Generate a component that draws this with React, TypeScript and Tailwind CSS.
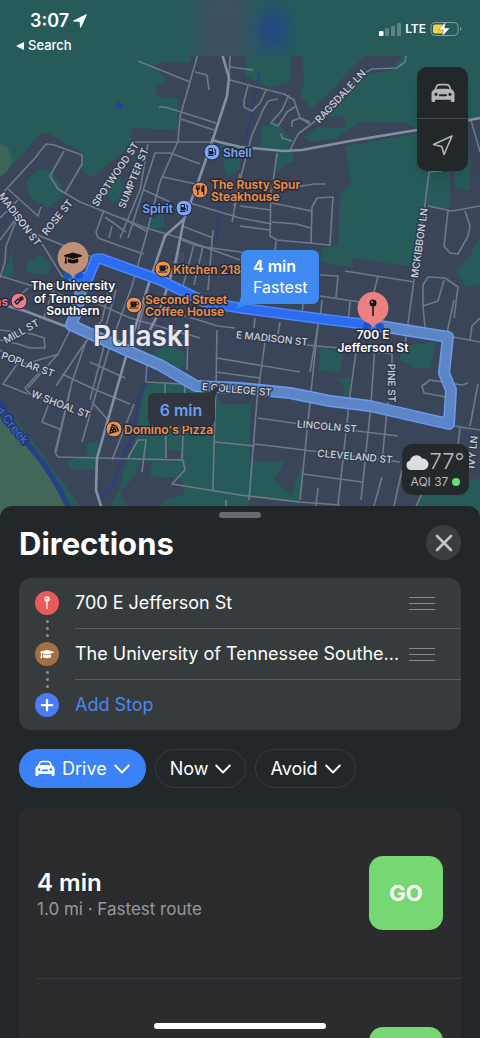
import type { ReactNode } from "react";
import { Plus, X } from "lucide-react";
import { FaCoffee, FaGasPump, FaGraduationCap, FaPizzaSlice } from "react-icons/fa";
import { FaUtensils } from "react-icons/fa6";

const PARKS = [
  "M0 0H190V63L160 62 154 66 167 81 155 87 158 98 178 98 178 130 132 128 131 145 108 164 92 178 80 167 83 153 65 143 48 133 40 134 22 155 0 178Z",
  "M246 50H292L290 82 270 88 245 76Z",
  "M302 50H372L352 68 330 92 312 108 300 96 304 82Z",
  "M407 50H480V117L418 129 405 123 360 122 346 132 344 116 322 118 340 92 366 74 392 70Z",
  "M303 137 318 127 348 128 338 138 312 142Z",
  "M262 126 278 123 292 141 286 150 294 154 293 162 284 163 280 172 276 168 276 152 260 148Z",
  "M346 146 418 133 425 140 429 172 425 215 412 266 400 265 352 258 353 267 320 262 322 248 338 245 340 193 351 185 348 165Z",
  "M429 172H450V208L427 206Z",
  "M452 160 470 156V190L455 188Z",
  "M456 271 470 256 480 236V284L465 287Z",
  "M26 182 40 168 52 172 66 194 48 208 30 197Z",
  "M112 178 121 176 124 198 112 204 107 194Z",
  "M220 142 240 144V168L226 178Z",
  "M148 222 164 212 164 226 154 231 147 228Z",
  "M26 263 40 255 50 263 49 275 26 272Z",
  "M4 274 12 250 14 278 0 276Z",
  "M0 406 18 422 45 458 80 506 80 520H0Z",
  "M155 350 170 346 184 352 186 364 177 372 152 370Z",
  "M145 384 175 384 216 392 222 404H251L250 440 250 462H284L274 480 291 496 302 463 300 520H104L120 488 124 470 135 440Z",
  "M85 445 98 440 98 470 70 470 68 460 88 456Z",
  "M320 348 344 352 340 372 318 371Z",
  "M337 378 350 378 350 396 344 396 344 386Z",
  "M400 346 436 342 430 368 415 368 400 360Z",
  "M420 493 480 478V520H412Z",
];

const TOWN_BLOCKS = [
  "M140 460 152 462 150 476 180 478 185 494 165 500 150 516 128 510 120 492 135 476Z",
  "M165 450 182 450 178 462 166 460Z",
  "M251 404 262 404 262 462 250 462Z",
  "M251 496 300 504 300 520 246 520Z",
];

const STREETS = [
  "M138 61 190 82",
  "M199 50 180 117 178 141 160 182 146 236 132 286 108 352 82 442",
  "M195 72 207 75 209 90",
  "M159 107 165 107 216 123",
  "M181 119 214 130",
  "M230 56 229 80",
  "M230 80 252 86 284 94 294 100 300 118 310 124",
  "M230 67 253 70",
  "M248 86 244 100 244 107 252 111 260 103 266 90",
  "M278 99 268 101 262 112 252 135 240 180 232 222",
  "M289 95 282 110 271 123 278 126 287 112 296 106",
  "M310 122 300 118 292 121 292 127",
  "M281 133 282 138 292 141",
  "M406 56 405 62 397 68 372 69 361 75 314 122 298 134 290 150",
  "M132 142 146 142 212 142",
  "M148 144 140 190 120 238",
  "M200 164 170 153 155 153 148 175 128 238",
  "M163 177 196 184",
  "M0 196 35 158 46 144 54 145 82 155 82 164 65 193",
  "M64 151 50 176 58 189 80 202 146 228 180 238 240 260",
  "M8 189 38 216 41 207",
  "M18 200 0 218",
  "M0 240 18 216 6 246 5 262 0 278",
  "M35 232 62 276 98 288",
  "M30 232 100 260",
  "M104 210 96 232 98 238 120 246 144 254",
  "M105 217 126 232",
  "M112 226 109 238",
  "M144 190 170 202",
  "M122 218 148 232",
  "M182 226 213 238",
  "M190 203 240 218 272 224",
  "M194 244 182 290",
  "M203 246 194 285",
  "M182 240 198 246 240 252 276 262",
  "M213 230 208 290",
  "M240 174 234 206",
  "M277 153 272 190",
  "M271 190 270 236 277 240 330 245 333 197 317 198 312 207 311 243",
  "M272 203 312 211",
  "M272 222 296 224 311 228",
  "M240 206 271 210",
  "M240 226 270 230",
  "M276 241 275 252",
  "M296 187 314 184 326 184",
  "M442 171 429 172 425 205 414 280 405 345",
  "M428 206 452 211 480 206",
  "M448 211 444 246 450 253 458 254 468 236 470 226 465 211",
  "M471 120 480 152",
  "M345 271 414 282",
  "M378 276 372 300",
  "M320 275 338 276 336 297",
  "M320 296 360 302",
  "M322 300 320 320",
  "M350 302 348 322",
  "M303 304 302 316",
  "M423 306 423 285 428 277 445 278 458 287 454 318",
  "M444 280 438 301 423 306 425 328",
  "M100 281 110 284 102 320 80 350 56 386",
  "M55 283 44 318",
  "M72 326 58 354 28 388",
  "M0 350 25 364 59 354",
  "M0 330 32 334 44 338 45 348 30 348 18 344 0 340",
  "M20 360 3 384 28 394",
  "M44 367 25 388 30 394 50 401 42 422 62 430",
  "M86 341 72 382 56 452",
  "M62 374 96 390 130 404",
  "M90 362 125 378",
  "M70 390 55 452 58 457 183 460 185 470 172 484 240 495 300 502 340 505",
  "M92 402 108 420",
  "M104 346 90 400",
  "M134 404 112 460",
  "M147 360 146 382 218 386",
  "M128 458 138 440 146 440 142 472",
  "M165 384 166 458",
  "M185 384 182 460",
  "M188 330 187 370",
  "M217 330 216 386 214 442 213 490",
  "M165 310 218 326 235 328",
  "M217 358 300 372",
  "M216 372 260 378",
  "M265 342 257 400 249 500",
  "M318 324 300 500",
  "M357 344 350 395 338 505",
  "M375 344 371 404 361 500",
  "M388 402 382 460",
  "M306 345 340 348",
  "M318 326 310 372",
  "M392 364 392 354 376 352",
  "M258 418 300 424 398 436",
  "M255 444 280 447 400 462",
  "M215 442 255 446",
  "M303 474 362 482",
  "M318 488 316 506",
  "M382 477 374 506",
  "M402 470 394 506",
  "M424 490 414 510",
  "M468 383 462 385 430 380 422 386 424 393 446 397",
  "M478 384 470 426",
  "M460 428 458 446",
  "M454 426 480 430",
  "M448 336 480 342",
  "M454 300 446 338",
  "M480 318 472 326 470 340",
  "M280 322 278 334",
  "M255 318 254 328",
  "M226 500 225 516",
  "M90 300 130 318 200 338",
  "M116 290 106 326",
  "M146 300 138 330",
  "M28 288 12 302",
  "M0 276 72 298",
];

const AVENUES = [
  "M221 50 229 78 227 96 211 145 198 182 187 212 184 219 165 236 150 280 125 360 97 458 96 490 104 516",
  "M184 219 176 260 160 310 150 330",
  "M211 140 240 147 284 151 302 150 350 141 417 130 480 118",
  "M0 304 25 311 70 328",
];

const SLOW_ROUTE =
  "M83 280 77 310 71 325 128 351 160 365 196 386 240 388 290 393 330 401 370 406 449 424 451 390 444 373 448 337 380 326";
const FAST_ROUTE = "M73 277 88 278 96 259 102 259 160 280 205 302 240 308 330 320 372 325";

type Label = { text: string; x: number; y: number; turn: number };

const STREET_LABELS: Label[] = [
  { text: "RAGSDALE LN", x: 340, y: 96, turn: -47 },
  { text: "SPOTWOOD ST", x: 115, y: 174, turn: -56 },
  { text: "SUMPTER ST", x: 133, y: 178, turn: -68 },
  { text: "ROSE ST", x: 57, y: 217, turn: -51 },
  { text: "MADISON ST", x: 20, y: 219, turn: 53 },
  { text: "MCKIBBON LN", x: 419, y: 243, turn: -82 },
  { text: "MILL ST", x: 21, y: 331, turn: -29 },
  { text: "POPLAR ST", x: 28, y: 364, turn: 20 },
  { text: "W SHOAL ST", x: 61, y: 404, turn: 21 },
  { text: "E MADISON ST", x: 272, y: 338, turn: 6 },
  { text: "E COLLEGE ST", x: 237, y: 389, turn: 5 },
  { text: "LINCOLN ST", x: 327, y: 426, turn: 5 },
  { text: "CLEVELAND ST", x: 355, y: 456, turn: 5 },
  { text: "PINE ST", x: 392, y: 383, turn: 89 },
  { text: "IVY LN", x: 472, y: 452, turn: -84 },
];

function CarIcon({ className }: { className: string }) {
  return (
    <svg viewBox="0 0 24 20" className={className} fill="currentColor" aria-hidden="true">
      <path
        fillRule="evenodd"
        d="M7 1C8.500 .6 15.500 .6 17 1c.9.2 1.500.7 1.900 1.500L20.600 6.500C22.500 7.600 23.500 8.800 23.500 11v7c0 .6-.4 1-1 1h-1.600c-.6 0-1-.4-1-1v-1.300H4.100V18c0 .6-.4 1-1 1H1.500c-.6 0-1-.4-1-1v-7c0-2.200 1-3.400 2.900-4.500L5.100 2.500C5.500 1.700 6.100 1.200 7 1ZM7.300 2.700 6.600 3.300 5.300 6.300C9 5.700 15 5.700 18.700 6.300L17.400 3.300l-.7-.6C14.500 2.300 9.500 2.300 7.300 2.700ZM5 9.700a1.600 1.600 0 1 0 0 3.200 1.600 1.600 0 0 0 0-3.200Zm14 0a1.600 1.600 0 1 0 0 3.200 1.600 1.600 0 0 0 0-3.200ZM9 11.200c-.6 0-1 .4-1 1s.4 1 1 1h6c.6 0 1-.4 1-1s-.4-1-1-1H9Z"
      />
    </svg>
  );
}

function Chevron() {
  return (
    <svg viewBox="0 0 16 10" className="h-[10px] w-4" fill="none" stroke="currentColor" strokeWidth="1.800" strokeLinecap="round" strokeLinejoin="round" aria-hidden="true">
      <path d="M1.200 1.500 8 8.500 14.800 1.500" />
    </svg>
  );
}

function Place({
  x,
  y,
  color,
  lines,
  labelX,
  anchor = "start",
  children,
}: {
  x: number;
  y: number;
  color: string;
  lines: string[];
  labelX: number;
  anchor?: "start" | "end";
  children: ReactNode;
}) {
  const first = y + 5 - (lines.length - 1) * 6;
  return (
    <g>
      <circle cx={x} cy={y} r="8" fill={color} stroke="#20283a" strokeWidth="1" />
      <g color="#172033">{children}</g>
      <g fill={color} stroke="#252a38" strokeWidth="3" strokeLinejoin="round" paintOrder="stroke" fontSize="12" fontWeight="600" textAnchor={anchor}>
        {lines.map((line, i) => (
          <text key={line} x={labelX} y={first + i * 12}>
            {line}
          </text>
        ))}
      </g>
    </g>
  );
}

function MapCanvas() {
  return (
    <svg
      viewBox="0 0 480 520"
      preserveAspectRatio="xMidYMin slice"
      className="col-start-1 row-start-1 h-full w-full"
      role="img"
      aria-label="Map of Pulaski"
    >
      <defs>
        <filter id="haze" x="-50%" y="-50%" width="200%" height="200%">
          <feGaussianBlur stdDeviation="10" />
        </filter>
        <clipPath id="top-strip">
          <rect width="480" height="56" />
        </clipPath>
      </defs>
      <rect width="480" height="520" fill="#3b4559" />
      <g fill="#265b59">
        {PARKS.map((d) => (
          <path key={d} d={d} />
        ))}
      </g>
      <g fill="#3b4559">
        {TOWN_BLOCKS.map((d) => (
          <path key={d} d={d} />
        ))}
      </g>
      <path d="M0 143Q12 148 12 162 8 174 0 176Z" fill="#3a6557" />
      <path d="M0 418 30 445 68 505 70 520H0Z" fill="#426759" />
      <path d="M138 303 160 300 156 330 136 328ZM176 252 184 252 184 268 174 266Z" fill="#4a4668" />
      <circle cx="119" cy="106" r="4" fill="#22488a" />
      <g fill="none" stroke="#273f84" strokeLinecap="round">
        <path d="M0 402Q12 428 30 447 55 475 74 520" strokeWidth="5" />
        <path d="M150 370 146 384 138 400 134 430 122 460 114 484 100 498" strokeWidth="2" />
        <path d="M259 73 252 110 246 140M220 190 217 240" strokeWidth="2" opacity="0.7" />
      </g>
      <g fill="none" stroke="#6e798b" strokeWidth="1.600" strokeLinejoin="round">
        {STREETS.map((d) => (
          <path key={d} d={d} />
        ))}
      </g>
      <g fill="none" stroke="#8490a0" strokeWidth="2.600" strokeLinejoin="round">
        {AVENUES.map((d) => (
          <path key={d} d={d} />
        ))}
      </g>

      <g clipPath="url(#top-strip)">
        <rect width="480" height="56" fill="#265b59" />
        <g filter="url(#haze)">
          <rect x="200" y="-10" width="48" height="80" fill="#3c4f62" />
          <ellipse cx="273" cy="30" rx="15" ry="22" fill="#22458c" />
        </g>
      </g>

      {/* routes */}
      <g fill="none" strokeLinejoin="round" strokeLinecap="round">
        <path d={SLOW_ROUTE} stroke="#6b9ced" strokeWidth="12" />
        <path d={SLOW_ROUTE} stroke="#5b85c6" strokeWidth="9" />
        <path d={FAST_ROUTE} stroke="#4a88f8" strokeWidth="11" />
        <path d={FAST_ROUTE} stroke="#2c6cf0" strokeWidth="8" />
      </g>
      <g fill="#1c55c9">
        <circle cx="68" cy="275" r="4" />
        <circle cx="79" cy="275" r="4" />
        <circle cx="367" cy="326" r="4" />
        <circle cx="380" cy="327" r="4" />
      </g>

      <g fontSize="10" fontWeight="500" fill="#ccd3df" stroke="#333c4f" strokeWidth="3" strokeLinejoin="round" paintOrder="stroke" textAnchor="middle">
        {STREET_LABELS.map((label) => (
          <text key={label.text} x={label.x} y={label.y} dy="4" transform={`rotate(${label.turn} ${label.x} ${label.y})`}>
            {label.text}
          </text>
        ))}
        <text x="12" y="425" dy="4" transform="rotate(50 12 425)" fill="#3f66c4" stroke="#22366f" fontSize="12">
          d Creek
        </text>
      </g>

      <Place x={212} y={152} color="#7ba5f6" lines={["Shell"]} labelX={223}>
        <FaGasPump x={208} y={148} size={8} />
      </Place>
      <Place x={184} y={208} color="#7ba5f6" lines={["Spirit"]} labelX={173} anchor="end">
        <FaGasPump x={180} y={204} size={8} />
      </Place>
      <Place x={200} y={190} color="#ee9049" lines={["The Rusty Spur", "Steakhouse"]} labelX={211}>
        <FaUtensils x={195} y={185} size={10} />
      </Place>
      <Place x={163} y={269} color="#ee9049" lines={["Kitchen 218"]} labelX={173}>
        <FaCoffee x={158} y={264} size={10} />
      </Place>
      <Place x={134} y={305} color="#ee9049" lines={["Second Street", "Coffee House"]} labelX={145}>
        <FaCoffee x={129} y={300} size={10} />
      </Place>
      <Place x={114} y={429} color="#ee9049" lines={["Domino's Pizza"]} labelX={124}>
        <FaPizzaSlice x={109} y={424} size={10} />
      </Place>
      <Place x={19} y={301} color="#ee7d8c" lines={["ns"]} labelX={8} anchor="end">
        <path d="M15 302l3-3 2 2-3 3ZM20 298l2-1 1 2-2 1Z" fill="none" stroke="currentColor" strokeWidth="1.500" />
      </Place>

      <text x="93" y="346" fontSize="28" fontWeight="600" fill="#e3e8f2" stroke="#3a4357" strokeWidth="2" paintOrder="stroke">
        Pulaski
      </text>

      {/* destination pins */}
      <path d="M73 242a16 16 0 0 1 5 31q-3 1-5 5-2-4-5-5a16 16 0 0 1 5-31Z" fill="#c09178" />
      <FaGraduationCap x={64} y={249} size={18} color="#111111" />
      <path d="M373 292a16 16 0 0 1 5 31q-3 1-5 5-2-4-5-5a16 16 0 0 1 5-31Z" fill="#ec8080" />
      <circle cx="373" cy="303" r="3.500" fill="#111111" />
      <circle cx="372" cy="302" r="1" fill="#ec8080" />
      <path d="M373 306V316" stroke="#111111" strokeWidth="1.500" />
      <g fontSize="12" fontWeight="600" fill="#ffffff" stroke="#272e3e" strokeWidth="3" strokeLinejoin="round" paintOrder="stroke" textAnchor="middle">
        <text x="73" y="290">The University</text>
        <text x="73" y="303">of Tennessee</text>
        <text x="73" y="315">Southern</text>
        <text x="373" y="339">700 E</text>
        <text x="373" y="352">Jefferson St</text>
      </g>

      {/* route time callouts */}
      <path d="M248 250h64q7 0 7 7v40q0 7-7 7h-56q-10 0-20 5 5-9 5-15v-37q0-7 7-7Z" fill="#3f8af3" />
      <text x="253" y="272" fontSize="16" fontWeight="600" fill="#ffffff">
        4 min
      </text>
      <text x="253" y="293" fontSize="16" fill="#ffffff">
        Fastest
      </text>
      <path d="M155 393h44q13 0 23-9-7 9-7 16v19q0 7-7 7h-53q-7 0-7-7v-19q0-7 7-7Z" fill="#30353e" />
      <text x="181" y="416" fontSize="16" fontWeight="600" fill="#6b9ff5" textAnchor="middle">
        6 min
      </text>
    </svg>
  );
}

function StatusBar() {
  return (
    <header className="flex justify-between px-4 pt-3 text-white">
      <div>
        <div className="flex h-[18px] items-center gap-1 pl-[14px] text-lg font-semibold">
          3:07
          <svg viewBox="0 0 14 14" className="h-[14px] w-[14px]" fill="currentColor" stroke="currentColor" strokeLinejoin="round" aria-hidden="true">
            <path d="M13.400.600.600 7 7 7.200 7.600 13.400Z" />
          </svg>
        </div>
        <a href="#search" className="flex h-[30px] items-center gap-1 pt-px text-[13px] font-medium">
          <svg viewBox="0 0 8 8" className="h-2 w-2" fill="currentColor" aria-hidden="true">
            <path d="M8 0V8L0 4Z" />
          </svg>
          Search
        </a>
      </div>
      <div className="flex h-[34px] items-center gap-1 pr-[2px] text-xs font-semibold">
        <svg viewBox="0 0 22 13" className="h-[13px] w-[22px]" fill="#ffffff" aria-hidden="true">
          <rect y="8" width="4.500" height="5" rx="1" />
          <g opacity="0.25">
            <rect x="6" y="5" width="4" height="8" rx="1" />
            <rect x="12" y="3" width="4" height="10" rx="1" />
            <rect x="18" width="4" height="13" rx="1" />
          </g>
        </svg>
        LTE
        <svg viewBox="0 0 32 16" className="h-4 w-8" aria-hidden="true">
          <rect x="1" y="1.500" width="27" height="13" rx="4" fill="none" stroke="#7f9f9d" />
          <rect x="3" y="3.500" width="12" height="9" rx="2" fill="#f2d147" />
          <path d="M30 6v4q1.500-.500 1.500-2T30 6Z" fill="#7f9f9d" />
          <path d="M16 .5 8.500 9h5L12 15.500 20 7h-5.500Z" fill="#ffffff" stroke="#265b59" strokeWidth="0.400" />
        </svg>
      </div>
    </header>
  );
}

function MapControls() {
  return (
    <div className="mr-3 mt-[7px] w-[51px] self-end overflow-hidden rounded-[10px] bg-[#222729] text-[#b4b6b7] shadow-lg">
      <button type="button" aria-label="Choose map" className="flex h-[52px] w-full items-center justify-center border-b border-[#474c4e]">
        <CarIcon className="h-5 w-6" />
      </button>
      <button type="button" aria-label="My location" className="flex h-[52px] w-full items-center justify-center">
        <svg viewBox="0 0 22 22" className="h-[22px] w-[22px]" fill="none" stroke="currentColor" strokeWidth="1.600" strokeLinejoin="round" aria-hidden="true">
          <path d="M20 2 1.500 10.500 9.800 12.500 12 20.500Z" />
        </svg>
      </button>
    </div>
  );
}

function WeatherBadge() {
  return (
    <div className="mb-[25px] mr-[11px] mt-auto flex h-[51px] w-[67px] flex-col items-center self-end rounded-[10px] bg-[#24292b] pt-[5px] text-[#b9bbbc]">
      <div className="flex h-[25px] items-center text-[22px] font-light">
        <svg viewBox="0 0 23 16" className="h-4 w-[23px]" fill="#dcdddf" aria-hidden="true">
          <path d="M5 16a4.800 4.800 0 0 1-1-9.400A6.500 6.500 0 0 1 16 4.600 5.700 5.700 0 0 1 17.500 16Z" />
        </svg>
        77°
      </div>
      <div className="flex items-center gap-1 text-xs leading-4">
        AQI 37
        <span className="h-2 w-2 rounded-full bg-[#5fdc78]" />
      </div>
    </div>
  );
}

function Dots() {
  return (
    <div className="flex h-[27px] flex-col items-center justify-center gap-1">
      <span className="h-[3px] w-[3px] rounded-full bg-[#8d9192]" />
      <span className="h-[3px] w-[3px] rounded-full bg-[#8d9192]" />
      <span className="h-[3px] w-[3px] rounded-full bg-[#8d9192]" />
    </div>
  );
}

function StopRow({ name }: { name: string }) {
  return (
    <li className="flex h-[51px] items-center border-b border-[#5a6062]">
      <span className="min-w-0 flex-1 whitespace-nowrap">{name}</span>
      <button type="button" aria-label={`Reorder ${name}`} className="mr-[26px] flex w-[26px] flex-col gap-[5px]">
        <span className="h-px bg-[#84898a]" />
        <span className="h-px bg-[#84898a]" />
        <span className="h-px bg-[#84898a]" />
      </button>
    </li>
  );
}

function Stops() {
  return (
    <div className="mt-[18px] flex rounded-xl bg-[#363b3d] text-lg text-white">
      <div className="flex flex-col items-center pl-4 pt-[13px]">
        <span className="flex h-6 w-6 items-center justify-center rounded-full bg-[#eb5a5a]">
          <svg viewBox="0 0 8 14" className="h-[14px] w-2" aria-hidden="true">
            <circle cx="4" cy="3" r="2.800" fill="#ffffff" />
            <circle cx="3.200" cy="2.300" r="0.900" fill="#eb5a5a" />
            <path d="M4 5V13" stroke="#ffffff" strokeWidth="1.200" />
          </svg>
        </span>
        <Dots />
        <span className="flex h-6 w-6 items-center justify-center rounded-full bg-[#a46f42]">
          <FaGraduationCap size={14} aria-hidden="true" />
        </span>
        <Dots />
        <span className="flex h-6 w-6 items-center justify-center rounded-full bg-[#4a7cf6]">
          <Plus size={18} strokeWidth={3} aria-hidden="true" />
        </span>
      </div>
      <ul className="ml-4 min-w-0 flex-1">
        <StopRow name="700 E Jefferson St" />
        <StopRow name="The University of Tennessee Southe..." />
        <li>
          <button type="button" className="flex h-[50px] w-full items-center text-[#4d87ec]">
            Add Stop
          </button>
        </li>
      </ul>
    </div>
  );
}

function RouteRow({ time, detail }: { time: string; detail: string }) {
  return (
    <li className="ml-[18px] flex items-center justify-between border-b border-[#3a3d3f] py-12 pr-[18px]">
      <div>
        <p className="text-2xl font-semibold text-white">{time}</p>
        <p className="text-[17px] leading-5 text-[#98989c]">{detail}</p>
      </div>
      <button type="button" className="h-[74px] w-[74px] rounded-[14px] bg-[#77d773] text-[22px] font-bold text-white">
        GO
      </button>
    </li>
  );
}

export default function App() {
  return (
    <main className="relative flex h-screen flex-col overflow-hidden bg-[#222829] font-['Inter','Liberation_Sans',sans-serif]">
      <section className="grid aspect-[12/13] w-full shrink-0">
        <MapCanvas />
        <div className="z-10 col-start-1 row-start-1 flex flex-col">
          <StatusBar />
          <MapControls />
          <WeatherBadge />
        </div>
      </section>

      <section className="z-10 -mt-[14px] flex-1 rounded-t-xl bg-[#222829] px-[19px] pt-[6px]">
        <div className="mx-auto h-[6px] w-[42px] rounded-full bg-[#666b6c]" />
        <div className="mt-[7px] flex h-[35px] items-center justify-between">
          <h1 className="pt-1 text-[31px] font-bold text-white">Directions</h1>
          <button type="button" aria-label="Close" className="flex h-[35px] w-[35px] items-center justify-center rounded-full bg-[#393e40] text-[#c2c5c6]">
            <X size={28} strokeWidth={2.25} />
          </button>
        </div>

        <Stops />

        <div className="mt-[19px] flex gap-[9px] text-lg text-white">
          <button type="button" className="flex h-[39px] items-center gap-[7px] rounded-full bg-[#3c82f7] px-4">
            <CarIcon className="h-[17px] w-5" />
            Drive
            <Chevron />
          </button>
          <button type="button" className="flex h-[39px] items-center gap-[7px] rounded-full border border-[#363c3d] px-[14px]">
            Now
            <Chevron />
          </button>
          <button type="button" className="flex h-[39px] items-center gap-[7px] rounded-full border border-[#363c3d] px-[14px]">
            Avoid
            <Chevron />
          </button>
        </div>

        <ul className="mt-5 rounded-t-xl bg-[#2c2c2e]">
          <RouteRow time="4 min" detail="1.0 mi · Fastest route" />
          <RouteRow time="6 min" detail="1.3 mi" />
        </ul>
      </section>

      <div className="absolute bottom-[9px] left-1/2 z-20 h-[6px] w-[172px] -translate-x-1/2 rounded-full bg-white" />
    </main>
  );
}
